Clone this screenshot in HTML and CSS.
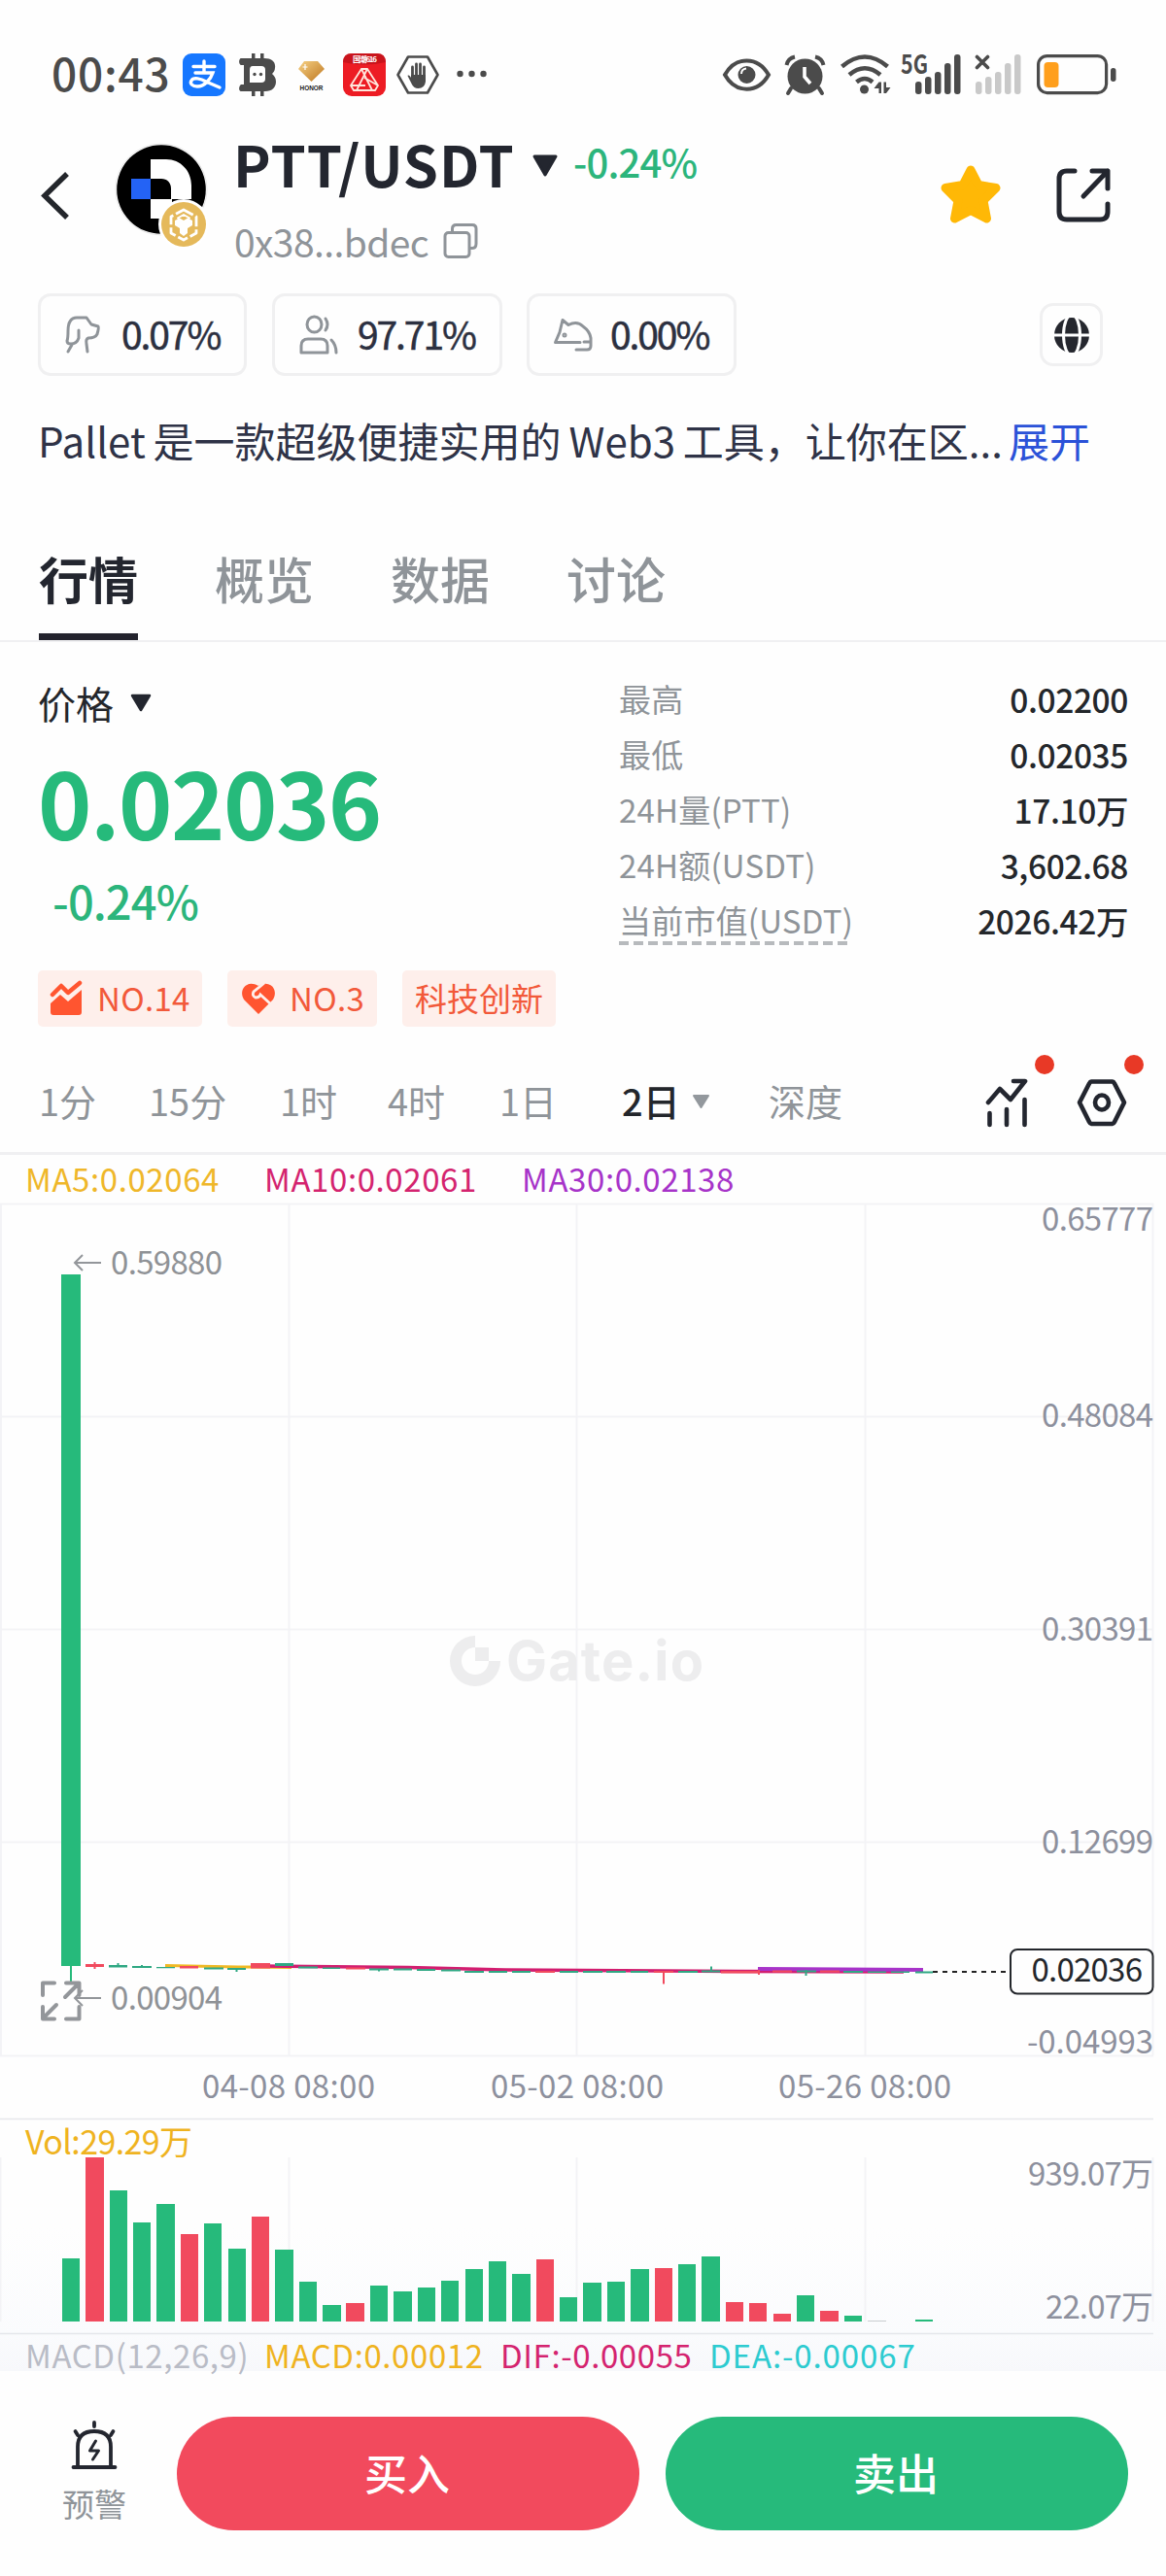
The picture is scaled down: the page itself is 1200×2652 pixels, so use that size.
FILE: index.html
```html
<!DOCTYPE html>
<html lang="zh-CN">
<head>
<meta charset="utf-8">
<title>PTT/USDT</title>
<link rel="stylesheet" href="styles.css">
</head>
<body>
<div class="status">
  <span class="clock">00:43</span>
  <svg class="s-pay" width="44" height="44" viewBox="0 0 44 44"><rect width="44" height="44" rx="9" fill="#1677ff"/><g fill="none" stroke="#fff" stroke-width="3.4" stroke-linecap="round"><path d="M11 13.500h22M22 8v12M13 20h18c-2 6-8 14-16 14-5 0-8-3-6-6 2-4 10-2 15 1l14 6"/></g></svg>
  <svg class="s-bit" width="38" height="44" viewBox="0 0 38 44"><g fill="#4b4b4b"><path d="M13 0h3.500v6H13zM22 0h3.500v6H22zM13 38h3.500v6H13zM22 38h3.500v6H22z"/><path d="M2 5h24c8 0 12 4 11 10 0 3-2 5-3 6 2 2 4 4 4 8 0 6-4 10-11 10H2c-3 0-2-6 0-7h3V12H2C-1 11 0 5 2 5z"/></g><path d="M14 13h9q4 0 4 4v9q0 4-4 4H11V17q0-4 3-4z" fill="#fff"/><circle cx="16" cy="21.500" r="1.700" fill="#4b4b4b"/><circle cx="22.500" cy="21.500" r="1.700" fill="#4b4b4b"/></svg>
  <svg class="s-honor" width="29" height="32" viewBox="0 0 29 32"><defs><linearGradient id="gold" x1="0" y1="0" x2="1" y2="1"><stop offset="0" stop-color="#f6d083"/><stop offset="1" stop-color="#bd7620"/></linearGradient></defs><path d="M7 1h14l7 8-13.500 13L1 9z" fill="url(#gold)"/><path d="M8 4v6M5.500 7h5" stroke="#fff" stroke-width="1.200"/><text x="2.500" y="30.500" textLength="24" lengthAdjust="spacingAndGlyphs" class="honor">HONOR</text></svg>
  <svg class="s-red" width="44" height="44" viewBox="0 0 44 44"><rect width="44" height="44" rx="9" fill="#ed1c24"/><path d="M0 9q0-9 9-9h26q9 0 9 9-22 5-44 0z" fill="#c9141c"/><text x="10" y="9" textLength="25" class="promo">国潮616</text><path d="M19 16h6l11 17-3 5H11l-3-5zM19 16l11 22M25 16L14 38M8 33h15M22 25l14 8" fill="none" stroke="#ffe6dc" stroke-width="1.800"/></svg>
  <svg class="s-hand" width="44" height="40" viewBox="0 0 44 40"><path d="M12 1.500h20L42.500 20 32 38.500H12L1.500 20z" fill="#fff" stroke="#4b4b4b" stroke-width="2.600" stroke-linejoin="round"/><path d="M16.500 24V12M20.500 22V9M24.500 22V9M28.500 23V12" stroke="#4b4b4b" stroke-width="2.800" stroke-linecap="round"/><path d="M15 20h15v7q-1 7-7.500 7-5 0-7-5l-4-8c1-1 2.500 0 3.500 2z" fill="#4b4b4b"/></svg>
  <svg class="s-dots" width="31" height="8" viewBox="0 0 31 8" fill="#4b4b4b"><circle cx="3.500" cy="4" r="3.200"/><circle cx="15.500" cy="4" r="3.200"/><circle cx="27.500" cy="4" r="3.200"/></svg>
  <svg class="s-eye" width="49" height="32" viewBox="0 0 49 32"><path d="M2 16C13-3.500 36-3.500 47 16 36 35.500 13 35.500 2 16z" fill="none" stroke="#4b4b4b" stroke-width="4"/><circle cx="24.500" cy="16" r="9" fill="#4b4b4b"/><path d="M19 15q0-5 5-5.500" fill="none" stroke="#fff" stroke-width="2"/></svg>
  <svg class="s-alarm" width="41" height="41" viewBox="0 0 41 41"><circle cx="20.500" cy="21.500" r="18" fill="#4b4b4b"/><path d="M6 34l-3 5M35 34l3 5" stroke="#4b4b4b" stroke-width="4" stroke-linecap="round"/><path d="M1.500 10Q3 3 10 1.500M39.500 10Q38 3 31 1.500" fill="none" stroke="#4b4b4b" stroke-width="4"/><path d="M20 12v10l6 7" fill="none" stroke="#fff" stroke-width="3.600"/></svg>
  <svg class="s-wifi" width="51" height="41" viewBox="0 0 51 41"><g fill="none" stroke="#4b4b4b" stroke-width="4.500"><path d="M1.500 12.500Q25-7.500 48.500 12.500M9 21Q25 7.500 41 21M16.500 28.500Q25 21.500 33 28.500"/></g><circle cx="24.500" cy="36" r="4.500" fill="#4b4b4b"/><path d="M34.500 35l5-6.500H42V40h-2.500v-5zM44.500 28.500H47V34h4.500L47 40h-2.500z" fill="#4b4b4b"/></svg>
  <svg class="s-5g" width="61" height="42" viewBox="0 0 61 42"><text x="-1" y="20" textLength="28" lengthAdjust="spacingAndGlyphs" class="net">5G</text><g fill="#4b4b4b"><rect x="14" y="28" width="6.500" height="13" rx="3"/><rect x="24" y="23" width="6.500" height="18" rx="3"/><rect x="34" y="18" width="6.500" height="23" rx="3"/><rect x="44" y="9" width="6.500" height="32" rx="3"/><rect x="54" y="0" width="6.500" height="41" rx="3"/></g></svg>
  <svg class="s-nosim" width="47" height="42" viewBox="0 0 47 42"><path d="M1.500 2.500l11 11M12.500 2.500l-11 11" stroke="#4b4b4b" stroke-width="3.600" stroke-linecap="round"/><g fill="#c9c9c9"><rect x="0" y="28" width="6.500" height="13" rx="3"/><rect x="10" y="23" width="6.500" height="18" rx="3"/><rect x="20" y="18" width="6.500" height="23" rx="3"/><rect x="30" y="9" width="6.500" height="32" rx="3"/><rect x="40" y="0" width="6.500" height="41" rx="3"/></g></svg>
  <svg class="s-batt" width="82" height="42" viewBox="0 0 82 42"><rect x="1.600" y="1.600" width="70" height="38" rx="9" fill="none" stroke="#4b4b4b" stroke-width="3.200"/><rect x="7.500" y="8" width="15" height="26" rx="4" fill="#ff9f1c"/><rect x="76" y="14" width="5.500" height="14" rx="2.700" fill="#4b4b4b"/></svg>
</div>

<header class="header">
  <svg class="back" width="28" height="49" viewBox="0 0 28 49"><path d="M26 2L3 24.500 26 47" fill="none" stroke="#23262b" stroke-width="5.500"/></svg>
  <svg class="coin" width="96" height="110" viewBox="0 0 96 110"><circle cx="48" cy="48" r="47" fill="#fff" stroke="#e9e9e9" stroke-width="1"/><circle cx="48" cy="48" r="45.800"/><path d="M37 17h16c15 0 26 12 26 27v14H58V47c0-6-4-10-10-10H37z" fill="#fff"/><path d="M17 37h20v21H17z" fill="#2463f5"/><path d="M37 58h22v20H37z" fill="#fff"/><circle cx="71" cy="84" r="26" fill="#fff"/><circle cx="71" cy="84" r="23" fill="#e5b95b"/><g fill="none" stroke="#fff" stroke-width="2.800" stroke-linejoin="round"><path d="M71 69l13 7v17l-13 7-13-7V76z" stroke-dasharray="11 3"/><path d="M71 74l6 3.500-6 3.500-6-3.500z" stroke-width="2"/></g><path d="M62 80l4-2 5 3 5-3 4 2v5l-5 3v5l-4 3-4-3v-5l-5-3z" fill="#fff"/></svg>
  <div class="title">
    <div class="title-row"><h1>PTT/USDT</h1><svg width="28" height="24" viewBox="0 0 28 24"><path d="M3 2h22L14 21z" fill="#23262f" stroke="#23262f" stroke-width="3" stroke-linejoin="round"/></svg><span class="pct">-0.24%</span></div>
    <div class="addr-row"><span>0x38...bdec</span><svg width="36" height="36" viewBox="0 0 36 36" fill="none" stroke="#8f9499" stroke-width="3"><rect x="2" y="9.500" width="25" height="25" rx="3.500"/><path d="M9.500 9V5.500q0-4 4-4H30q4 0 4 4V21q0 4.500-4 4.500h-3"/></svg></div>
  </div>
  <svg class="star" width="62" height="60" viewBox="0 0 62 60"><path d="M31 5l8 15.500 18 3L44 36.500 47.500 55 31 46.500 14.500 55 18 36.500 5 23.500l18-3z" fill="#ffb806" stroke="#ffb806" stroke-width="9" stroke-linejoin="round"/></svg>
  <svg class="share" width="56" height="56" viewBox="0 0 56 56" fill="none" stroke="#23262f" stroke-width="5" stroke-linecap="round" stroke-linejoin="round"><path d="M19 3h-8q-8 0-8 8v34q0 8 8 8h34q8 0 8-8v-8M37 3h16v18M53 3L28 29"/></svg>
</header>

<div class="chips">
  <div class="chip c1"><svg width="36" height="40" viewBox="0 0 36 40" fill="none" stroke="#8f9499" stroke-width="3" stroke-linecap="round" stroke-linejoin="round"><path d="M14 15v8q-2 6-8 6-4 0-4-3 1-3 1-10Q3 2 12 2h10l5 7 7 2q1 1-1 8-2 4-9 4-3 1-2 6l1 8M7 30l-4 7"/></svg><span>0.07%</span></div>
  <div class="chip c2"><svg width="40" height="42" viewBox="0 0 40 42" fill="none" stroke="#8f9499" stroke-width="3" stroke-linecap="round" stroke-linejoin="round"><ellipse cx="15.500" cy="10" rx="7.500" ry="8"/><path d="M2 39v-7q0-7 7-7h13q7 0 7 7v7zM27 4q4 6 0 12M33 26q5 5 5 13"/></svg><span>97.71%</span></div>
  <div class="chip c3"><svg width="40" height="34" viewBox="0 0 40 34" fill="none" stroke="#8f9499" stroke-width="3" stroke-linecap="round" stroke-linejoin="round"><path d="M27 24.500H1.500L6 14 9 1.500l6 5Q24 2 30 8q7 5 8 12v8q0 4-4 4H23M38 24h-7"/><circle cx="11" cy="17" r="1"/></svg><span>0.00%</span></div>
  <div class="globe"><svg width="38" height="38" viewBox="0 0 38 38"><circle cx="19" cy="19" r="18" fill="#25272e"/><path d="M0 19h38" stroke="#fff" stroke-width="3"/><ellipse cx="19" cy="19" rx="8.500" ry="21" fill="none" stroke="#fff" stroke-width="3"/></svg></div>
</div>

<p class="desc"><span class="desc-a">Pallet 是一款超级便捷实用的 Web3 工具，让你在区...</span><a>展开</a></p>

<nav class="tabs"><span class="tab on">行情</span><span class="tab">概览</span><span class="tab">数据</span><span class="tab">讨论</span></nav>

<section class="overview">
  <div class="price-col">
    <div class="label">价格<svg width="22" height="20" viewBox="0 0 22 20"><path d="M2 2h18l-9 15z" fill="#23262f" stroke="#23262f" stroke-width="2.500" stroke-linejoin="round"/></svg></div>
    <div class="price">0.02036</div>
    <div class="change">-0.24%</div>
    <div class="tags">
      <div class="tag t1"><svg width="34" height="36" viewBox="0 0 34 36"><path d="M3 14l9-9 7 7L31 2" fill="none" stroke="#ff5530" stroke-width="4.500" stroke-linecap="round" stroke-linejoin="round"/><path d="M1 23l10-9 8 7 14-12v23q0 3-3 3H4q-3 0-3-3z" fill="#ff5530"/></svg><span>NO.14</span></div>
      <div class="tag t2"><svg width="36" height="34" viewBox="0 0 36 34"><path d="M18 33L3 18C-3 8 6-3 18 4 30-3 39 8 33 18z" fill="#ff5530"/><path d="M24 1l-11 9q-2 4 2 6 4 0 5-3l12 11" fill="none" stroke="#feefeb" stroke-width="2.800"/></svg><span>NO.3</span></div>
      <div class="tag t3"><span>科技创新</span></div>
    </div>
  </div>
  <dl class="stats">
    <div><dt>最高</dt><dd>0.02200</dd></div>
    <div><dt>最低</dt><dd>0.02035</dd></div>
    <div><dt>24H量(PTT)</dt><dd>17.10万</dd></div>
    <div><dt>24H额(USDT)</dt><dd>3,602.68</dd></div>
    <div><dt class="dashed">当前市值(USDT)</dt><dd>2026.42万</dd></div>
  </dl>
</section>

<nav class="frames">
  <span class="f1">1分</span><span class="f2">15分</span><span class="f3">1时</span><span class="f4">4时</span><span class="f5">1日</span><span class="f6">2日</span>
  <svg class="caret" width="20" height="18" viewBox="0 0 20 18"><path d="M2 2h15l-7.500 12z" fill="#93989d" stroke="#93989d" stroke-width="2" stroke-linejoin="round"/></svg>
  <span class="f7">深度</span>
  <div class="tool ind"><svg width="46" height="54" viewBox="0 0 46 54" fill="none" stroke="#23262f" stroke-width="4.600" stroke-linecap="round" stroke-linejoin="round"><path d="M3 26L15 12l11 11L41 4H29M4.500 37v12M22 33v16M40.500 23v26"/></svg><i></i></div>
  <div class="tool cfg"><svg width="52" height="54" viewBox="0 0 52 54" fill="none" stroke="#23262f" stroke-width="4.600" stroke-linejoin="round"><path d="M15 4.500h22q1 0 2 2L49 26 39 46q-1 2-2 2H15q-1 0-2-2L3 26 13 6.500q1-2 2-2z"/><ellipse cx="26" cy="26" rx="7" ry="7.500"/></svg><i></i></div>
</nav>

<div class="ma"><span class="m5">MA5:0.02064</span><span class="m10">MA10:0.02061</span><span class="m30">MA30:0.02138</span></div>

<svg class="plot" width="1200" height="946" viewBox="0 1237 1200 946">
  <g class="grid"><path d="M0 1239.500H1187M0 1458.500H1187M0 1677.500H1187M0 1896.500H1187M0 2116.500H1187M1 1239V2116M297.500 1239V2116M593.500 1239V2116M890.500 1239V2116M1186.500 1239V2116"/></g>
  <g fill="#ededee"><path d="M489 1684v12a14 14 0 1 0 14 14h12a26 26 0 1 1-26-26z"/><path d="M489 1696h14v14h-14z"/><text x="521" y="1730" textLength="203" class="brand">Gate.io</text></g>
  <g fill="#26ba7b"><path d="M63 1312h20v712H63zM72 2024h2v18h-2z"/></g>
  <g class="lines">
    <path d="M170 2023.500L245 2025 300 2025.500" stroke="#f0b924" stroke-width="3"/>
    <path d="M268 2024L420 2025.500 520 2028 600 2028.500 760 2029.500 930 2030" stroke="#d21e70" stroke-width="3.500"/>
    <path d="M780 2027L950 2028" stroke="#a734c9" stroke-width="4"/>
  </g>
  <g fill="#f14a5e">
    <path d="M88 2022h19v3H88zM96.500 2020h2v7h-2zM185 2024h19v2.500H185zM258 2021h20v5.500H258zM356 2025.500h20v2H356zM551 2029h20v2H551zM673 2029h20v2H673zM742 2029h40v2.500H742zM682 2029h2v13.500h-2zM780 2028h2v5h-2zM795 2028.500h20v2H795zM844 2028.500h20v2H844z"/>
  </g>
  <g fill="#2fa883">
    <path d="M112 2023h19v2.500h-19zM120.500 2021h2v3h-2zM136 2024h20v2h-20zM145 2023h2v3h-2zM161 2025h19v1.200h-19zM210 2025.500h20v2h-20zM234 2026h19v2h-19zM242.500 2026h2v4h-2zM283 2021h19v3h-19zM307 2024.500h20v2h-20zM332 2025.500h18v1.500h-18zM380 2026.500h20v2h-20zM389 2027h2v2.500h-2zM405 2026.500h19v2h-19zM429 2027h19v2h-19zM454 2027.500h20v2h-20zM478 2029h20v2h-20zM503 2029h19v2h-19zM527 2029h19v2h-19zM576 2029h19v2h-19zM600 2029h20v2h-20zM624 2029h20v2h-20zM649 2029h18v2h-18zM698 2029h20v2h-20zM722 2028.500h19v2h-19zM731 2024.500h2v4h-2zM820 2028.500h20v2h-20zM828.500 2028h2v6h-2zM868 2029h20v2h-20zM893 2029.500h19v1.500h-19zM917 2029.500h19v1.500h-19zM942 2029.500h18v2h-18z"/>
  </g>
  <path d="M960 2030H1036" stroke="#222" stroke-width="2.200" stroke-dasharray="5 5"/>
  <rect x="1040" y="2007" width="146.500" height="45.500" rx="7" fill="#fefefe" stroke="#23262b" stroke-width="2"/>
  <text x="1061.500" y="2040" textLength="114.500" class="now">0.02036</text>
  <g class="axis">
    <text x="1072" y="1267" textLength="115">0.65777</text>
    <text x="1072" y="1469" textLength="115">0.48084</text>
    <text x="1072" y="1688.500" textLength="115">0.30391</text>
    <text x="1072" y="1907.500" textLength="115">0.12699</text>
    <text x="1057" y="2113.500" textLength="130">-0.04993</text>
    <text x="208" y="2160" textLength="178">04-08 08:00</text>
    <text x="505" y="2160" textLength="178">05-02 08:00</text>
    <text x="801" y="2160" textLength="178">05-26 08:00</text>
  </g>
  <g class="mark">
    <text x="114" y="1312" textLength="115">0.59880</text>
    <text x="114" y="2069" textLength="115">0.00904</text>
    <path d="M104 1300H77M85 1292l-8 8 8 8M104 2057H77M85 2049l-8 8 8 8" stroke-width="2"/>
    <path d="M44 2054v-12.500h12M68 2041.500h13.500V2054M79 2044L67 2056M44 2066v12.500h12M46 2076l12-12M68 2078.500h13.500V2066" stroke-width="4" stroke-linecap="round" stroke-linejoin="round"/>
  </g>
  <path d="M0 2181.500H1187" stroke="#e7e8ec" stroke-width="1.500"/>
</svg>

<svg class="plot" width="1200" height="221" viewBox="0 2183 1200 221">
  <defs><linearGradient id="fade" x1="0" y1="0" x2="0" y2="1"><stop offset=".5" stop-color="#fefefe"/><stop offset="1" stop-color="#fafbfd"/></linearGradient></defs>
  <rect y="2183" width="1200" height="221" fill="url(#fade)"/>
  <g class="grid"><path d="M.5 2221V2390M297.500 2221V2390M593.500 2221V2390M890.500 2221V2390M1186.500 2221V2390"/></g>
  <text x="26" y="2217.500" textLength="172" class="vol">Vol:29.29万</text>
  <path fill="#26ba7b" d="M64 2325h18v65H64zM113 2255h18v135h-18zM137 2288h18v102h-18zM161 2269h19v121h-19zM210 2289h18v101h-18zM235 2315h18v75h-18zM283 2316h19v74h-19zM308 2349h18v41h-18zM332 2373h19v17h-19zM381 2353h18v37h-18zM405 2359h19v31h-19zM430 2355h18v35h-18zM454 2348h18v42h-18zM479 2336h18v54h-18zM503 2328h18v62h-18zM527 2341h19v49h-19zM576 2365h18v25h-18zM600 2350h19v40h-19zM625 2349h18v41h-18zM649 2336h19v54h-19zM698 2331h18v59h-18zM722 2323h19v67h-19zM820 2363h18v27h-18zM869 2384h18v6h-18zM942 2388h18v2h-18z"/>
  <path fill="#f14a5e" d="M88 2221h19v169H88zM186 2300h18v90h-18zM259 2282h18v108h-18zM356 2371h19v19h-19zM552 2326h18v64h-18zM674 2335h18v55h-18zM747 2370h18v20h-18zM771 2371h18v19h-18zM796 2382h18v8h-18zM844 2379h19v11h-19z"/>
  <path fill="#c9cdd0" d="M893 2389h19v1h-19z"/>
  <g class="axis"><text x="1058" y="2249.500" textLength="129">939.07万</text><text x="1076" y="2386.500" textLength="111">22.07万</text></g>
  <path d="M0 2402.500H1187" stroke="#e4e6eb" stroke-width="1.500"/>
</svg>

<div class="macd"><span class="k0">MACD(12,26,9)</span><span class="k1">MACD:0.00012</span><span class="k2">DIF:-0.00055</span><span class="k3">DEA:-0.00067</span></div>

<footer class="footer">
  <div class="alert"><svg width="48" height="52" viewBox="0 0 48 52" fill="none" stroke="#23262f" stroke-width="3.800" stroke-linecap="round" stroke-linejoin="round"><path d="M7 46V27q0-16 17-16t17 16v19M2.500 48h43M24 2v4M4.500 11l2.500 4M43.500 11L41 15"/><path d="M25.500 21l-6 10h9l-6 9" stroke-width="3"/></svg><span>预警</span></div>
  <button class="buy">买入</button>
  <button class="sell">卖出</button>
</footer>
</body>
</html>
```
FILE: styles.css
```css
* { box-sizing: border-box; margin: 0; padding: 0; }
body { width: 1200px; height: 2652px; overflow: hidden; background: #fefefe; color: #23262f; font-family: "Noto Sans CJK SC", "Noto Sans", sans-serif; }
svg { display: block; flex: none; overflow: visible; }
span, dt, dd, h1 { white-space: nowrap; }

.status { display: flex; align-items: flex-start; height: 110px; padding: 43px 51px 0 53px; }
.clock { width: 121px; height: 67px; line-height: 62px; font-size: 46px; font-weight: 500; color: #4b4b4b; letter-spacing: .8px; }
.status svg { margin-top: 12px; }
.status .s-pay { margin-left: 14px; }
.status .s-bit { margin-left: 14px; }
.status .s-honor { margin: 19px 0 0 22px; }
.status .s-red { margin-left: 18px; }
.status .s-hand { margin: 14px 0 0 11px; }
.status .s-dots { margin: 29px 0 0 18px; }
.status .s-eye { margin: 18px 0 0 auto; }
.status .s-alarm { margin: 14px 0 0 15px; }
.status .s-wifi { margin: 13px 0 0 16px; }
.status .s-5g { margin: 13px 0 0 12px; }
.status .s-nosim { margin: 13px 0 0 15px; }
.status .s-batt { margin: 13px 0 0 16px; }
.honor { font: 700 7px "Liberation Sans", sans-serif; fill: #222; }
.promo { font: 700 8px "Noto Sans CJK SC", sans-serif; fill: #fff; }
.net { font: 700 27px "Noto Sans CJK SC", sans-serif; fill: #4b4b4b; }

.header { display: flex; height: 192px; padding: 28px 57px 0 43px; align-items: flex-start; }
.back { margin-top: 39px; }
.coin { margin: 9px 0 0 47px; }
.title { margin-left: 27px; }
.title-row { display: flex; height: 60px; }
h1 { width: 307px; font-size: 58px; line-height: 60px; font-weight: 700; letter-spacing: .9px; margin-left: -1px; }
.title-row svg { margin-top: 21px; }
.pct { margin: -2px 0 0 15px; font-size: 40px; line-height: 60px; font-weight: 500; color: #2cb57c; letter-spacing: -.8px; }
.addr-row { display: flex; height: 50px; margin-top: 25px; font-size: 39px; line-height: 50px; color: #8f9499; letter-spacing: -.6px; }
.addr-row span { width: 215px; }
.addr-row svg { margin-top: 7px; }
.star { margin: 32px 0 0 auto; }
.share { margin: 35px 0 0 57px; }

.chips { display: flex; height: 85px; padding: 0 65px 0 39px; }
.chip { display: flex; align-items: center; border: 3px solid #f0f0f1; border-radius: 13px; padding-left: 25px; font-size: 39px; color: #2c3040; line-height: 72px; letter-spacing: -2.1px; }
.chip span { margin-top: -4px; -webkit-text-stroke: .5px #2c3040; }
.c1 { width: 215px; }
.c1 span { margin-left: 22px; }
.c2 { width: 237px; margin-left: 26px; }
.c2 span { margin-left: 20px; }
.c3 { width: 216px; margin-left: 25px; }
.c3 span { margin-left: 18px; }
.globe { display: flex; align-items: center; justify-content: center; width: 65px; height: 65px; margin: 10px 0 0 auto; border: 3px solid #f0f0f1; border-radius: 14px; }

.desc { display: flex; height: 60px; margin-top: 36px; padding-left: 39px; font-size: 42px; line-height: 60px; color: #2f3347; word-spacing: -1.5px; }
.desc-a { width: 999px; }
.desc a { color: #2b52d8; }

.tabs { display: flex; height: 178px; padding: 77px 0 0 40px; gap: 81px; border-bottom: 2px solid #f0f0f2; }
.tab { width: 100px; height: 99px; line-height: 71px; font-size: 51px; font-weight: 500; color: #8f9499; }
.tab.on { width: 102px; font-weight: 700; color: #23262f; border-bottom: 7px solid #23232d; }
.tab.on + .tab { margin-left: -2px; }

.overview { display: flex; height: 396px; padding: 30px 39px 0 39px; }
.price-col { width: 598px; padding-top: 7px; }
.label { display: flex; height: 50px; font-size: 39px; line-height: 50px; color: #23262b; }
.label svg { margin: 16px 0 0 17px; }
.price { height: 100px; margin-top: 26px; line-height: 100px; font-size: 94px; font-weight: 700; color: #26ba7b; letter-spacing: -1.5px; }
.change { height: 60px; margin: 23px 0 0 15px; line-height: 60px; font-size: 47px; font-weight: 500; color: #2cb57c; letter-spacing: -.9px; }
.tags { display: flex; height: 58px; margin-top: 42px; }
.tag { display: flex; align-items: center; background: #feefeb; border-radius: 5px; color: #f2593a; font-size: 33px; line-height: 58px; }
.tag span { margin-top: -2px; }
.t1 { width: 169px; padding-left: 12px; }
.t1 span { margin-left: 15px; letter-spacing: .3px; }
.t2 { width: 154px; margin-left: 26px; padding-left: 14px; }
.t2 span { margin-left: 14px; letter-spacing: .3px; }
.t3 { width: 158px; margin-left: 26px; padding-left: 13px; }

.stats { flex: 1; }
.stats div { display: flex; justify-content: space-between; height: 57px; line-height: 57px; font-size: 33px; }
dt { color: #8f9499; letter-spacing: .2px; }
dd { color: #24272b; font-weight: 500; font-size: 33.5px; letter-spacing: -.4px; }
.dashed { height: 54px; background: repeating-linear-gradient(90deg, #b7babd 0 10px, transparent 10px 15px) 0 100% / 236px 4px no-repeat; }

.frames { display: flex; height: 132px; padding: 21px 40px 0; border-bottom: 3px solid #f0f0f2; font-size: 38px; line-height: 110px; color: #8f9499; }
.f1 { width: 113px; }
.f2 { width: 135px; }
.f3 { width: 111px; }
.f4 { width: 115px; }
.f5 { width: 126px; }
.f6 { width: 72px; color: #23262b; font-weight: 500; }
.caret { margin-top: 48px; }
.f7 { margin-left: 59px; }
.tool { position: relative; height: 110px; padding-top: 31px; }
.ind { margin-left: auto; }
.cfg { margin-left: 48px; }
.tool i { position: absolute; top: 8px; width: 20px; height: 20px; border-radius: 50%; background: #e83926; }
.ind i { left: 51px; }
.cfg i { left: 49px; }

.ma { display: flex; height: 48px; padding-left: 26px; font-size: 33px; line-height: 48px; letter-spacing: .6px; }
.m5 { width: 246px; color: #efb72a; }
.m10 { width: 265px; color: #d4246f; }
.m30 { color: #a734c9; }

.grid { fill: none; stroke: #f3f3f6; stroke-width: 2; }
.lines { fill: none; }
.brand { font: 700 56px Inter, sans-serif; }
.axis text { font-size: 33px; fill: #8d909d; }
.mark text { font-size: 33px; fill: #8f9296; }
.mark path { fill: none; stroke: #93969a; }
.now { font-size: 33px; fill: #23262b; }
.vol { font-size: 34px; fill: #efb31f; }

.macd { display: flex; height: 37px; padding-left: 26px; background: linear-gradient(#fafbfd, #f7f8fb); font-size: 33px; line-height: 41px; letter-spacing: .6px; }
.k0 { width: 246px; color: #b9bcc6; }
.k1 { width: 243px; color: #efb31f; }
.k2 { width: 215px; color: #d4246f; }
.k3 { color: #2dcbd0; letter-spacing: .9px; }

.footer { display: flex; height: 211px; padding: 47px 39px 0 64px; }
.alert { display: flex; flex-direction: column; width: 118px; font-size: 33px; line-height: 50px; color: #8f9499; }
.alert svg { margin: 4px 0 0 9px; }
.alert span { margin-top: 8px; }
.footer button { width: 476px; height: 117px; border: 0; border-radius: 59px; color: #fff; font: 500 44px/112px "Noto Sans CJK SC", sans-serif; padding: 0 2px 4px 0; }
.buy { background: #f24a5d; }
.footer .sell { margin-left: 27px; background: #26ba7b; }
```
